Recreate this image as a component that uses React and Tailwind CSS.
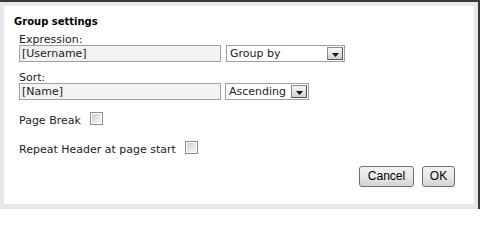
import React from 'react';

// Group settings dialog

function TextBox({ value, width }) {
  return (
    <div
      className={`h-[17px] border border-[#a0a0a0] bg-[#f3f3f3] px-[2px] text-[11px] leading-[15px] text-[#222] ${width}`}
    >
      {value}
    </div>
  );
}

function Dropdown({ value, width }) {
  return (
    <div className={`flex h-[17px] items-center justify-between border border-[#a0a0a0] bg-white pl-[3px] pr-[1px] text-[11px] leading-[15px] text-[#222] ${width}`}>
      <span>{value}</span>
      <span className="flex h-[13px] w-[16px] items-end justify-center border border-[#8a8a8a] border-b-[#555] border-r-[#555] bg-gradient-to-b from-[#f6f6f6] to-[#d2d2d2] pb-[2px]">
        <svg width="7" height="4" viewBox="0 0 7 4">
          <path d="M0 0h7L3.5 4z" fill="#111" />
        </svg>
      </span>
    </div>
  );
}

function CheckBox() {
  return (
    <span className="-mt-[2px] inline-block h-[13px] w-[13px] shrink-0 border border-[#8f8f8f] bg-white p-[1px]">
      <span className="block h-full w-full bg-gradient-to-br from-[#cfcfcf] to-[#fbfbfb]" />
    </span>
  );
}

function Button({ children, width }) {
  return (
    <button
      className={`h-[21px] rounded-[3px] border border-[#707070] bg-gradient-to-b from-[#f2f2f2] via-[#e8e8e8] to-[#d3d3d3] text-[12px] leading-[19px] text-black ${width}`}
      style={{ fontFamily: '"Liberation Sans", Arial, sans-serif' }}
    >
      {children}
    </button>
  );
}

export default function App() {
  return (
    <div
      className="h-[209px] w-[480px] overflow-hidden border-t-2 border-r-2 border-[#3a3a3a] bg-[#e8e8e8] pb-[5px] pl-[4px] pr-[4px] pt-[4px]"
      style={{ fontFamily: '"DejaVu Sans", Verdana, sans-serif' }}
    >
      <div className="flex h-full flex-col bg-white pl-[10px] pr-[19px] pt-[9px]">
        <h3 className="text-[10px] font-bold leading-[14px] text-black">Group settings</h3>

        <div className="pl-[5px]">
          <div className="mt-[5px] text-[11px] leading-[11px] text-[#222]">Expression:</div>
          <div className="flex gap-[5px]">
            <TextBox value="[Username]" width="w-[202px]" />
            <Dropdown value="Group by" width="w-[119px]" />
          </div>

          <div className="mt-[10px] text-[11px] leading-[11px] text-[#222]">Sort:</div>
          <div className="flex gap-[4px]">
            <TextBox value="[Name]" width="w-[202px]" />
            <Dropdown value="Ascending" width="w-[84px]" />
          </div>

          <div className="mt-[14px] flex items-start gap-[9px] text-[11px] leading-[14px] text-[#222]">
            <span>Page Break</span>
            <CheckBox />
          </div>

          <div className="mt-[15px] flex items-start gap-[9px] text-[11px] leading-[14px] text-[#222]">
            <span>Repeat Header at page start</span>
            <CheckBox />
          </div>
        </div>

        <div className="mt-[9px] flex justify-end gap-[8px]">
          <Button width="w-[55px]">Cancel</Button>
          <Button width="w-[33px]">OK</Button>
        </div>
      </div>
    </div>
  );
}
